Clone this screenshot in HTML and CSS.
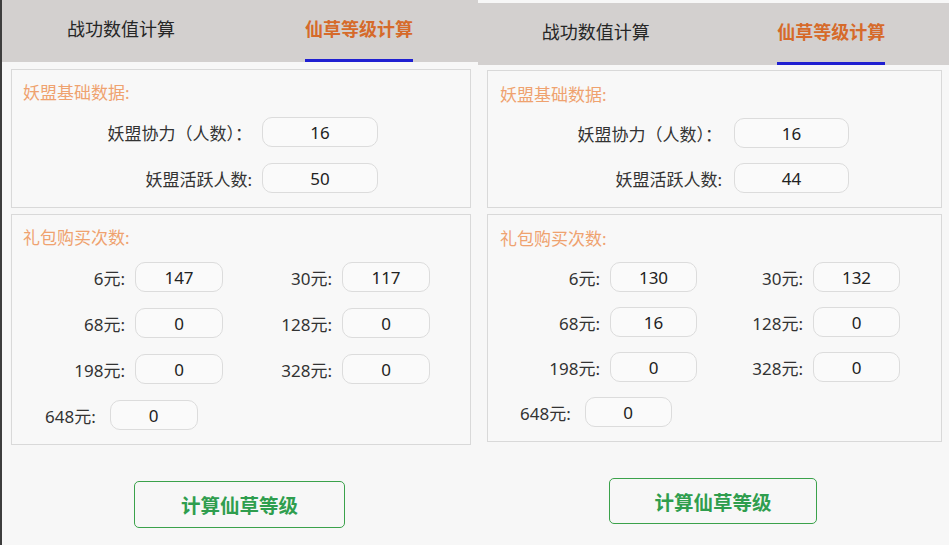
FILE: index.html
```html
<!DOCTYPE html>
<html lang="zh-CN">
<head>
    <meta charset="UTF-8">
    <meta name="viewport" content="width=device-width, initial-scale=1.0">
    <title>仙草等级计算</title>
    <link rel="stylesheet" href="styles.css">
</head>
<body>
    <div class="screens">
        <div class="panel panel-left">
            <div class="tabs">
                <div class="tab"><span>战功数值计算</span></div>
                <div class="tab active"><span>仙草等级计算</span></div>
            </div>
            <div class="content">
                <section class="group">
                    <div class="group-title">妖盟基础数据:</div>
                    <div class="field"><label>妖盟协力（人数）：</label><input type="text" value="16"></div>
                    <div class="field"><label>妖盟活跃人数:</label><input type="text" value="50"></div>
                </section>
                <section class="group">
                    <div class="group-title">礼包购买次数:</div>
                    <div class="gift-grid">
                        <div class="gift"><label>6元:</label><input type="text" value="147"></div>
                        <div class="gift"><label>30元:</label><input type="text" value="117"></div>
                        <div class="gift"><label>68元:</label><input type="text" value="0"></div>
                        <div class="gift"><label>128元:</label><input type="text" value="0"></div>
                        <div class="gift"><label>198元:</label><input type="text" value="0"></div>
                        <div class="gift"><label>328元:</label><input type="text" value="0"></div>
                        <div class="gift gift-last"><label>648元:</label><input type="text" value="0"></div>
                    </div>
                </section>
                <div class="actions"><button class="calc-btn">计算仙草等级</button></div>
            </div>
        </div>

        <div class="panel panel-right">
            <div class="tabs">
                <div class="tab"><span>战功数值计算</span></div>
                <div class="tab active"><span>仙草等级计算</span></div>
            </div>
            <div class="content">
                <section class="group">
                    <div class="group-title">妖盟基础数据:</div>
                    <div class="field"><label>妖盟协力（人数）：</label><input type="text" value="16"></div>
                    <div class="field"><label>妖盟活跃人数:</label><input type="text" value="44"></div>
                </section>
                <section class="group">
                    <div class="group-title">礼包购买次数:</div>
                    <div class="gift-grid">
                        <div class="gift"><label>6元:</label><input type="text" value="130"></div>
                        <div class="gift"><label>30元:</label><input type="text" value="132"></div>
                        <div class="gift"><label>68元:</label><input type="text" value="16"></div>
                        <div class="gift"><label>128元:</label><input type="text" value="0"></div>
                        <div class="gift"><label>198元:</label><input type="text" value="0"></div>
                        <div class="gift"><label>328元:</label><input type="text" value="0"></div>
                        <div class="gift gift-last"><label>648元:</label><input type="text" value="0"></div>
                    </div>
                </section>
                <div class="actions"><button class="calc-btn">计算仙草等级</button></div>
            </div>
        </div>
    </div>
</body>
</html>
```

FILE: styles.css
```css
* {
    margin: 0;
    padding: 0;
    box-sizing: border-box;
    font-family: "Noto Sans", "Noto Sans CJK SC", sans-serif;
}

body {
    background: #f7f7f7;
    width: 949px;
    height: 545px;
    overflow: hidden;
}

.screens {
    display: flex;
    height: 545px;
}

.panel-left {
    width: 478px;
    border-left: 2px solid #3d3d3d;
}

.panel-right {
    width: 471px;
    padding-top: 3px;
}

/* tabs */
.tabs {
    display: flex;
    height: 62px;
    background: #d3d0cf;
}

.tab {
    flex: 1;
    text-align: center;
}

.tab span {
    display: inline-block;
    height: 62px;
    line-height: 59px;
    font-size: 18px;
    color: #262626;
    border-bottom: 3px solid transparent;
}

.tab.active span {
    color: #d66a2a;
    font-weight: 700;
    border-bottom-color: #1f1fd1;
}

/* content */
.content {
    padding: 7px 7px 0 9px;
}

.panel-right .content {
    padding-top: 5px;
}

.group {
    background: #f8f8f8;
    border: 1px solid #d9d9d9;
    padding: 11px 11px 14px;
}

.group + .group {
    margin-top: 6px;
}

.panel-right .group {
    padding: 12px 12px 14px;
}

.group-title {
    font-size: 17px;
    line-height: 24px;
    color: #efa26f;
    margin-bottom: 12px;
}

.panel-right .group-title {
    margin-bottom: 11px;
}

label {
    font-size: 17px;
    color: #333;
    white-space: nowrap;
}

input {
    height: 30px;
    border: 1px solid #dcdcdc;
    border-radius: 10px;
    background: #fafafa;
    text-align: center;
    font-size: 17px;
    color: #222;
    outline: none;
}

.field {
    display: flex;
    align-items: center;
    gap: 10px;
    height: 30px;
}

.field + .field {
    margin-top: 16px;
}

.panel-right .field + .field {
    margin-top: 15px;
}

.field label {
    width: 229px;
    text-align: right;
}

.field input {
    width: 116px;
}

.panel-right .field label {
    width: 222px;
    margin-right: 2px;
}

.panel-right .field input {
    width: 115px;
}

.gift-grid {
    display: grid;
    grid-template-columns: 200px 200px;
    column-gap: 7px;
    row-gap: 16px;
    justify-items: end;
}

.panel-right .gift-grid {
    grid-template-columns: 197px 197px;
    column-gap: 6px;
    row-gap: 15px;
}

.gift {
    display: flex;
    align-items: center;
    gap: 10px;
    height: 30px;
}

.gift input {
    width: 88px;
}

.panel-right .gift input {
    width: 87px;
}

.gift-last {
    justify-self: start;
    margin-left: 22px;
}

.gift-last label {
    margin-right: 4px;
}

.panel-right .gift-last {
    margin-left: 20px;
}

/* button */
.actions {
    text-align: center;
    margin-top: 36px;
    padding-right: 3px;
}

.calc-btn {
    width: 211px;
    height: 47px;
    border: 1.5px solid #3ba24b;
    border-radius: 5px;
    background: transparent;
    color: #2f9e4e;
    font-size: 19.5px;
    font-weight: 700;
    cursor: pointer;
}

.panel-right .calc-btn {
    width: 208px;
    height: 46px;
}
```
